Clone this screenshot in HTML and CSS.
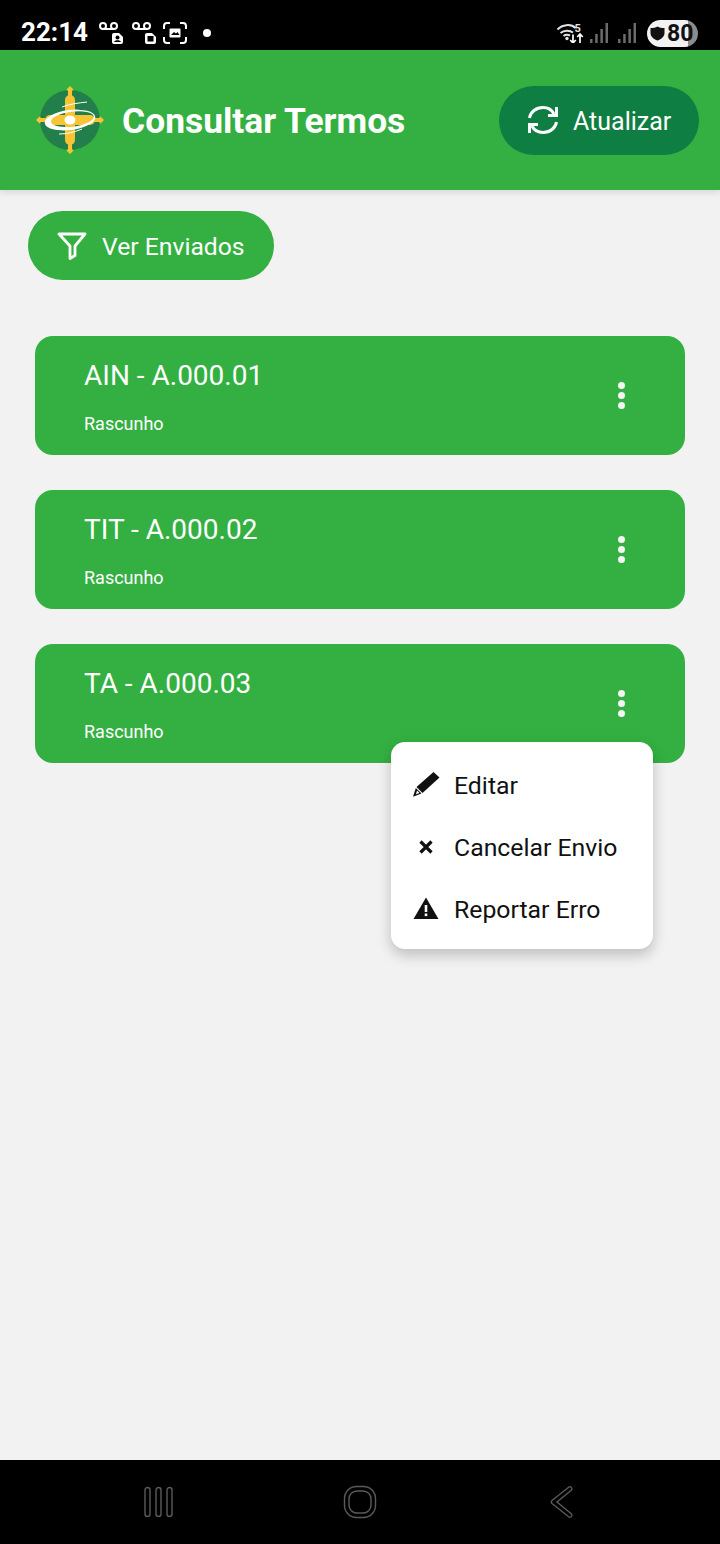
FILE: index.html
```html
<!DOCTYPE html>
<html lang="pt">
<head>
<meta charset="utf-8">
<title>Consultar Termos</title>
<link rel="stylesheet" href="styles.css">
</head>
<body>
<div class="phone">
  <div class="statusbar">
    <div class="status-left">
      <span class="clock">22:14</span>
      <svg class="st-icon" width="26" height="22" viewBox="0 0 26 22"><g fill="none" stroke="#fff" stroke-width="2"><circle cx="4" cy="4" r="3"/><circle cx="15" cy="4" r="3"/><path d="M4 7h11"/></g><path d="M13 13a2 2 0 0 1 2-2h5l4 4v5a2 2 0 0 1-2 2h-7a2 2 0 0 1-2-2z" fill="#fff"/><circle cx="18.500" cy="15.500" r="2" fill="#000"/><path d="M15 20c.5-2.500 6.500-2.500 7 0z" fill="#000"/></svg>
      <svg class="st-icon" width="24" height="22" viewBox="0 0 24 22"><g fill="none" stroke="#fff" stroke-width="2"><circle cx="4" cy="4" r="3"/><circle cx="15" cy="4" r="3"/><path d="M4 7h11"/></g><path d="M13 13a2 2 0 0 1 2-2h5l4 4v5a2 2 0 0 1-2 2h-7a2 2 0 0 1-2-2z" fill="#fff"/><rect x="15.500" y="14" width="6" height="5.500" fill="#000"/></svg>
      <svg class="st-icon" width="24" height="22" viewBox="0 0 24 22"><path d="M1 7V4a3 3 0 0 1 3-3h3M17 1h3a3 3 0 0 1 3 3v3M23 15v3a3 3 0 0 1-3 3h-3M7 21H4a3 3 0 0 1-3-3v-3" fill="none" stroke="#fff" stroke-width="2"/><rect x="6.500" y="6.500" width="11" height="9" rx="1" fill="#fff"/><path d="M8 13l3-3 2 1.500 1.500-1.500 2 3z" fill="#000"/></svg>
      <span class="dot"></span>
    </div>
    <div class="status-right">
      <svg class="wifi" width="27" height="20" viewBox="0 0 27 20"><g fill="none" stroke="#e4e4e4" stroke-width="2"><path d="M0.500 6.500C5 1.500 14 0.500 18.500 5"/><path d="M3.500 10c3.500-3 9-3 12.500-.5"/><path d="M6.500 13c2-1.500 4.500-1.500 6.500-.5"/></g><circle cx="10" cy="15.500" r="1.700" fill="#e4e4e4"/><text x="17.500" y="9" class="st-five">5</text><path d="M16 11.500V20m-2.800-3L16 20l2.800-3M23 20V11m-2.800 3L23 11l2.800 3" fill="none" stroke="#fff" stroke-width="1.700"/></svg>
      <svg width="18" height="20" viewBox="0 0 18 20"><g fill="#6b6b6b"><rect x="0" y="16" width="2.500" height="4"/><rect x="5.200" y="11" width="2.500" height="9"/><rect x="10.400" y="6" width="2.500" height="14"/><rect x="15.500" y="0" width="2.500" height="20"/></g></svg>
      <svg class="sig2" width="18" height="20" viewBox="0 0 18 20"><g fill="#6b6b6b"><rect x="0" y="16" width="2.500" height="4"/><rect x="5.200" y="11" width="2.500" height="9"/><rect x="10.400" y="6" width="2.500" height="14"/><rect x="15.500" y="0" width="2.500" height="20"/></g></svg>
      <div class="battery">
        <svg width="15" height="15" viewBox="0 0 15 15"><path d="M7.500 0.500c2 1 4 1.500 7 1.500v5c0 3.500-3 6-7 7.500-4-1.500-7-4-7-7.500V2c3 0 5-.5 7-1.500z" fill="#111"/></svg>
        <span>80</span>
      </div>
    </div>
  </div>

  <header class="appbar">
    <div class="brand">
      <svg class="logo" width="70" height="70" viewBox="0 0 70 70">
        <circle cx="35" cy="35" r="30" fill="#227f4c"/>
        <rect x="30" y="10" width="10" height="50" rx="5" fill="#f8c433"/>
        <rect x="10" y="30" width="50" height="10" rx="5" fill="#f8c433"/>
        <g fill="#f8c433">
          <path d="M35 1l3.500 3.500-1.500 1.500v6h-4V6l-1.500-1.500z"/>
          <path d="M35 69l3.500-3.500-1.500-1.500v-6h-4v6l-1.500 1.500z"/>
          <path d="M1 35l3.500-3.500L6 33h6v4H6l-1.500 1.500z"/>
          <path d="M69 35l-3.500-3.500L64 33h-6v4h6l1.500 1.500z"/>
        </g>
        <path transform="rotate(-7 35 35)" fill="#fff" fill-rule="evenodd" d="M9.500 35a25.500 10 0 1 0 51 0a25.500 10 0 1 0-51 0zM16 34.500a21.500 7.500 0 1 1 43 0a21.500 7.500 0 1 1-43 0z"/>
        <ellipse cx="35" cy="35" rx="5.500" ry="4.500" fill="#fff"/>
        <path d="M27 22c8-3 16-4 25-5M24 49c8 0 16-2 23-5" fill="none" stroke="#fff" stroke-width="1"/>
      </svg>
      <h1 class="title">Consultar Termos</h1>
    </div>
    <button class="pill pill-dark">
      <svg width="34" height="30" viewBox="0 0 34 30"><g fill="none" stroke="#fff" stroke-width="3"><path d="M3.500 13C4.500 7 10 2.500 17 2.500c5 0 9 2.500 11 6.500"/><path d="M30.500 17c-1 6-6.500 10.500-13.500 10.500-5 0-9-2.500-11-6.500"/><path d="M30.500 2v8.500H22"/><path d="M3.500 28v-8.500H12"/></g></svg>
      <span>Atualizar</span>
    </button>
  </header>

  <main class="content">
    <button class="pill pill-green">
      <svg width="30" height="30" viewBox="0 0 30 30"><path d="M2 3h26L18 15v9.500L13 27.500V15z" fill="none" stroke="#fff" stroke-width="2.800" stroke-linejoin="round"/></svg>
      <span>Ver Enviados</span>
    </button>

    <div class="cards">
      <article class="card">
        <div class="card-text"><div class="card-title">AIN - A.000.01</div><div class="card-sub">Rascunho</div></div>
        <div class="kebab"><i></i><i></i><i></i></div>
      </article>
      <article class="card">
        <div class="card-text"><div class="card-title">TIT - A.000.02</div><div class="card-sub">Rascunho</div></div>
        <div class="kebab"><i></i><i></i><i></i></div>
      </article>
      <article class="card">
        <div class="card-text"><div class="card-title">TA - A.000.03</div><div class="card-sub">Rascunho</div></div>
        <div class="kebab"><i></i><i></i><i></i></div>
        <div class="menu">
          <div class="menu-item">
            <svg width="28" height="28" viewBox="0 0 28 28"><path d="M21.500 1L27.500 6.500 10.500 22 4.500 16z" fill="#111"/><path d="M3.800 17L9.500 22.500 1 25.800z" fill="#111"/><path d="M5 19.500L7.500 22 4 23.200z" fill="#fff"/></svg>
            <span>Editar</span>
          </div>
          <div class="menu-item">
            <svg width="28" height="28" viewBox="0 0 28 28"><path d="M8.500 8.500l11 11m0-11l-11 11" stroke="#111" stroke-width="3.200" fill="none"/></svg>
            <span>Cancelar Envio</span>
          </div>
          <div class="menu-item">
            <svg width="28" height="28" viewBox="0 0 28 28"><path d="M14 2.500L26.500 24h-25z" fill="#111"/><rect x="12.700" y="10" width="2.600" height="7" fill="#fff"/><rect x="12.700" y="18.500" width="2.600" height="2.600" fill="#fff"/></svg>
            <span>Reportar Erro</span>
          </div>
        </div>
      </article>
    </div>
  </main>

  <nav class="navbar">
    <svg width="32" height="32" viewBox="0 0 32 32"><g fill="none" stroke="#5a5a5a" stroke-width="1.400"><rect x="2" y="1.500" width="5" height="29" rx="2.500"/><rect x="13" y="1.500" width="5" height="29" rx="2.500"/><rect x="24" y="1.500" width="5" height="29" rx="2.500"/></g></svg>
    <svg width="34" height="34" viewBox="0 0 34 34"><g fill="none" stroke="#5a5a5a" stroke-width="1.400"><rect x="1.500" y="1.500" width="31" height="31" rx="12"/><rect x="6" y="6" width="22" height="22" rx="8"/></g></svg>
    <svg class="nav-back" width="26" height="34" viewBox="0 0 26 34"><path d="M20 2c1.500-1 4 1 2.500 3L8 17l14.500 12c1.500 2-1 4-2.500 3L3 18.500c-1-1-1-2 0-3z" fill="none" stroke="#5a5a5a" stroke-width="1.400"/></svg>
  </nav>
</div>
</body>
</html>
```

FILE: styles.css
```css
* { box-sizing: border-box; }
html, body { margin: 0; padding: 0; }
body { background: #f2f2f2; font-family: Roboto, "Liberation Sans", sans-serif; }
.phone { width: 720px; height: 1544px; display: flex; flex-direction: column; overflow: hidden; background: #f2f2f2; }

.statusbar { height: 50px; background: #000; color: #fff; display: flex; justify-content: space-between; align-items: center; padding: 16px 22px 0 21px; flex: none; }
.status-left { display: flex; align-items: center; gap: 7px; }
.clock { font-size: 26px; font-weight: 700; width: 71px; line-height: 30px; margin-top: -2px; }
.st-icon { display: block; }
.dot { width: 8px; height: 8px; border-radius: 50%; background: #fff; margin-left: 9px; }
.status-right { display: flex; align-items: center; gap: 10px; }
.status-right svg { display: block; flex: none; }
.wifi { margin-right: -4px; }
.st-five { font: 700 11px Roboto, sans-serif; fill: #e4e4e4; }
.sig2 { margin-right: 1px; }
.battery { width: 51px; height: 27px; border-radius: 14px; display: flex; align-items: center; gap: 2px; padding-left: 3px; color: #111; font-size: 23px; font-weight: 700; background: linear-gradient(90deg, #f2f2f2 0, #f2f2f2 41px, #8c8c8c 41px); }

.appbar { height: 140px; flex: none; background: #33b041; display: flex; align-items: center; justify-content: space-between; padding: 0 21px 0 35px; box-shadow: 0 3px 6px rgba(0,0,0,.1); position: relative; }
.brand { display: flex; align-items: center; gap: 17px; }
.logo { display: block; }
.title { margin: 2px 0 0; color: #fff; font-size: 35.4px; font-weight: 700; line-height: 40px; }

.pill { display: flex; align-items: center; border: 0; border-radius: 35px; height: 69px; color: #fff; font-family: inherit; font-size: 25px; font-weight: 400; }
.pill span { padding-top: 2px; }
.pill-dark { width: 200px; background: #0f7e42; padding: 0 0 0 27px; gap: 13px; }
.pill-green { width: 246px; background: #33b041; padding: 0 0 0 29px; gap: 15px; font-size: 24.7px; }
.pill svg { display: block; flex: none; }

.content { flex: 1; padding: 21px 35px 0 28px; }
.cards { display: flex; flex-direction: column; gap: 35px; margin: 56px 0 0 7px; }
.card { position: relative; height: 119px; border-radius: 18px; background: #33b041; color: #fff; display: flex; justify-content: space-between; padding: 0 60px 0 49px; }
.card-text { padding-top: 23px; }
.card-title { font-size: 28px; line-height: 33px; }
.card-sub { font-size: 18px; line-height: 22px; margin-top: 21px; }
.kebab { display: flex; flex-direction: column; gap: 3px; padding-top: 46px; }
.kebab i { width: 7px; height: 7px; border-radius: 50%; background: #f4f4f4; display: block; }

.menu { position: absolute; left: 356px; top: 98px; width: 262px; height: 207px; background: #fff; border-radius: 14px; box-shadow: 0 6px 14px rgba(0,0,0,.22); color: #111; padding: 12px 0 0 21px; z-index: 2; }
.menu-item { display: flex; align-items: center; gap: 14px; height: 62px; font-size: 24.8px; }
.menu-item svg { display: block; flex: none; }

.navbar { height: 84px; flex: none; background: #000; display: flex; align-items: center; padding: 0 0 0 143px; gap: 168px; }
.navbar svg { display: block; flex: none; }
.nav-back { margin-left: 4px; }
```
